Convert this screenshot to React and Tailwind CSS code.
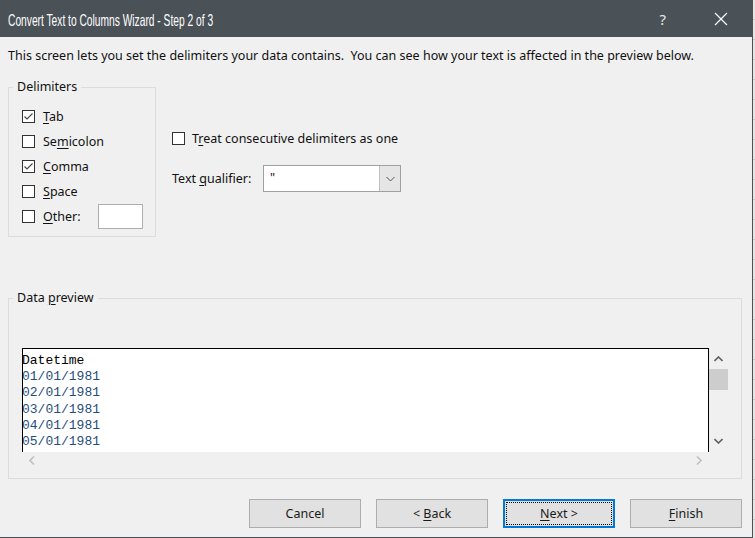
const U = ({ children }) => <span className="underline underline-offset-[2px] decoration-1">{children}</span>;

const Check = ({ checked }) => (
  <span className="w-[13px] h-[13px] border border-[#333333] bg-white flex items-center justify-center shrink-0">
    {checked && (
      <svg width="11" height="11" viewBox="0 0 11 11">
        <path d="M1.5 5.5 L4 8 L9.5 2.5" fill="none" stroke="#4a4a4a" strokeWidth="1.2" />
      </svg>
    )}
  </span>
);

const Option = ({ checked, children }) => (
  <div className="h-[25px] flex items-center">
    <Check checked={checked} />
    <span className="ml-[8px]">{children}</span>
  </div>
);

const Button = ({ children, focused }) => (
  <button
    type="button"
    className={
      focused
        ? 'w-[112px] h-[29px] bg-[#e1e1e1] border-2 border-[#0078d7] p-[1px] text-[#1a1a1a]'
        : 'w-[112px] h-[29px] bg-[#e1e1e1] border border-[#adadad] text-[#1a1a1a]'
    }
  >
    {focused ? (
      <span className="w-full h-full border border-dotted border-black flex items-center justify-center">{children}</span>
    ) : (
      children
    )}
  </button>
);

const rows = ['01/01/1981', '02/01/1981', '03/01/1981', '04/01/1981', '05/01/1981'];

export default function App() {
  return (
    <div className="w-[755px] h-[538px] flex font-['Noto_Sans','Liberation_Sans',sans-serif] text-[12.5px] leading-[16px] text-[#111111]">
      <div className="w-[753px] h-[538px] flex flex-col bg-[#f0f0f0] border-r border-b border-[#4a5157]">
        {/* title bar */}
        <div className="h-[37px] bg-[#4a5157] flex items-center text-white shrink-0">
          <span className="ml-[8px] mt-[3px] w-[205px] whitespace-nowrap font-['Liberation_Sans',sans-serif] text-[16.5px] origin-left scale-x-[0.62]">
            Convert Text to Columns Wizard - Step 2 of 3
          </span>
          <span className="ml-auto mr-[48px] text-[15px] text-[#e8e8e8]">?</span>
          <svg className="mr-[24px]" width="14" height="14" viewBox="0 0 14 14">
            <path d="M1 1 L13 13 M13 1 L1 13" stroke="#ffffff" strokeWidth="1.2" />
          </svg>
        </div>

        {/* content */}
        <div className="flex-1 flex flex-col">
          <p className="ml-[8px] mt-[11px] whitespace-nowrap">
            This screen lets you set the delimiters your data contains.&nbsp; You can see how your text is affected in the preview below.
          </p>

          <div className="flex mt-[15px]">
            <fieldset className="ml-[8px] w-[148px] border border-[#dcdcdc] pl-[4px] pb-[7px]">
              <legend className="px-[4px]">Delimiters</legend>
              <div className="ml-[9px] mt-[9px]">
                <Option checked><U>T</U>ab</Option>
                <Option>Se<U>m</U>icolon</Option>
                <Option checked><U>C</U>omma</Option>
                <Option><U>S</U>pace</Option>
                <div className="h-[25px] flex items-center">
                  <Check />
                  <span className="ml-[8px] w-[55px]"><U>O</U>ther:</span>
                  <span className="w-[45px] h-[25px] bg-white border border-[#adadad]" />
                </div>
              </div>
            </fieldset>

            <div className="ml-[16px] flex flex-col">
              <div className="mt-[47px] h-[25px] flex items-center">
                <Check />
                <span className="ml-[7px]">T<U>r</U>eat consecutive delimiters as one</span>
              </div>
              <div className="mt-[14px] flex items-center">
                <span className="w-[91px] pt-[1px]">Text <U>q</U>ualifier:</span>
                <div className="w-[138px] h-[27px] bg-white border border-[#a0a0a0] flex">
                  <span className="flex-1 pl-[6px] pt-[4px]">"</span>
                  <span className="w-[21px] bg-[#e5e5e5] border-l border-[#c0c0c0] flex items-center justify-center">
                    <svg width="9" height="6" viewBox="0 0 9 6">
                      <path d="M0.5 1 L4.5 5 L8.5 1" fill="none" stroke="#555555" strokeWidth="1" />
                    </svg>
                  </span>
                </div>
              </div>
            </div>
          </div>

          <fieldset className="ml-[8px] mt-[53px] w-[734px] border border-[#dcdcdc] pl-[4px] pb-[9px]">
            <legend className="px-[4px]">Data <U>p</U>review</legend>
            <div className="ml-[9px] mt-[42px]">
              <div className="flex">
                <div className="w-[687px] h-[104px] bg-white border-l border-t border-r border-black overflow-hidden pt-[4px] font-['Liberation_Mono',monospace] text-[13px] leading-[16.2px]">
                  <div className="-ml-px text-black">Datetime</div>
                  {rows.map((r) => (
                    <div key={r} className="-ml-px text-[#1f4e7c]">{r}</div>
                  ))}
                </div>
                <div className="w-[19px] h-[104px] flex flex-col items-center">
                  <svg className="mt-[8px]" width="9" height="6" viewBox="0 0 9 6">
                    <path d="M0.5 5 L4.5 1 L8.5 5" fill="none" stroke="#606060" strokeWidth="1.6" />
                  </svg>
                  <div className="mt-[7px] w-[19px] h-[21px] bg-[#cdcdcd]" />
                  <svg className="mt-auto mb-[8px]" width="9" height="6" viewBox="0 0 9 6">
                    <path d="M0.5 1 L4.5 5 L8.5 1" fill="none" stroke="#606060" strokeWidth="1.6" />
                  </svg>
                </div>
              </div>
              <div className="w-[687px] h-[17px] flex items-center justify-between px-[7px]">
                <svg width="6" height="9" viewBox="0 0 6 9">
                  <path d="M5 0.5 L1 4.5 L5 8.5" fill="none" stroke="#c0c0c0" strokeWidth="1.6" />
                </svg>
                <svg width="6" height="9" viewBox="0 0 6 9">
                  <path d="M1 0.5 L5 4.5 L1 8.5" fill="none" stroke="#c0c0c0" strokeWidth="1.6" />
                </svg>
              </div>
            </div>
          </fieldset>

          <div className="mt-[19px] mr-[10px] flex justify-end gap-[15px] pt-[1px]">
            <Button>Cancel</Button>
            <Button>&lt; <U>B</U>ack</Button>
            <Button focused><U>N</U>ext &gt;</Button>
            <Button><U>F</U>inish</Button>
          </div>
        </div>
      </div>
      <div className="w-[2px] h-[538px] bg-[repeating-linear-gradient(to_bottom,#e6e6e6_0px,#e6e6e6_19px,#c6c6c6_19px,#c6c6c6_20px)]" />
    </div>
  );
}
